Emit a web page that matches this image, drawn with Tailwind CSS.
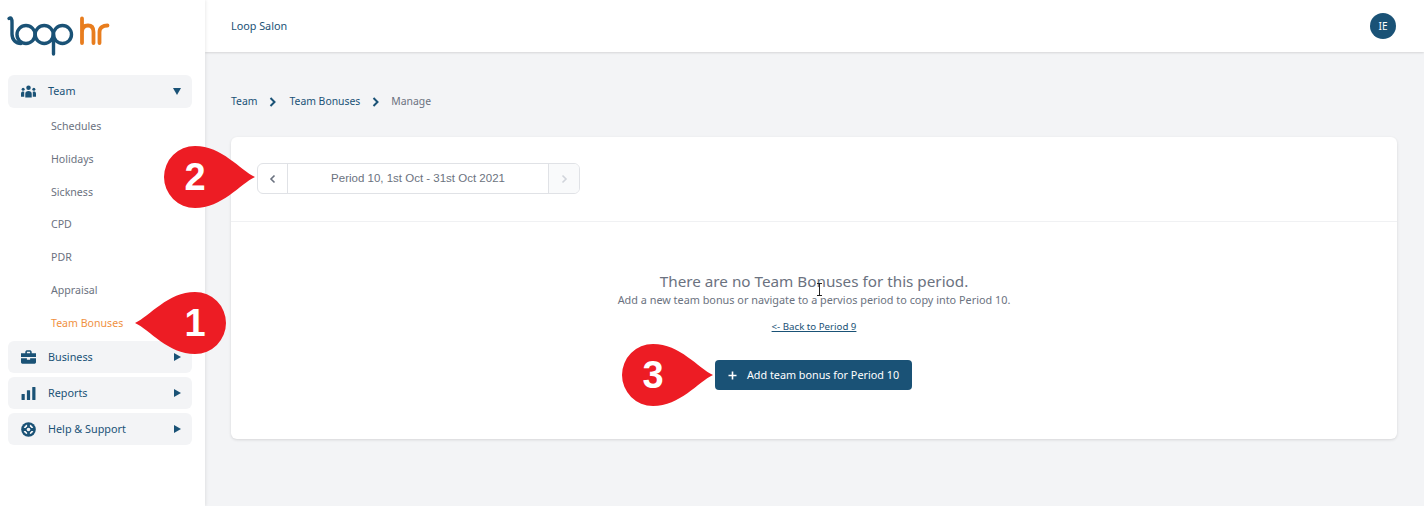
<!DOCTYPE html>
<html lang="en">
  <head>
    <meta charset="UTF-8" />
    <meta name="viewport" content="width=device-width, initial-scale=1.0" />
    <title>Team Bonuses</title>
    <script src="https://cdn.jsdelivr.net/npm/@tailwindcss/browser@4"></script>
  </head>
  <body>
    <main class="relative flex h-[506px] w-full overflow-hidden bg-[#f3f4f6] font-['Noto_Sans',sans-serif] text-[10.8px] text-[#1a5276]">
      <!-- Sidebar -->
      <aside class="z-10 flex w-[205px] shrink-0 flex-col bg-white pl-2 pr-[13px] shadow-[1px_0_3px_rgba(0,0,0,0.08)]">
        <div class="h-[75px] pt-[8px]">
          <svg width="120" height="52" viewBox="0 0 120 52" fill="none" stroke-width="3.4" stroke-linecap="round" class="-ml-2">
            <g stroke="#1a5276">
              <path d="M9 10.500 C11 9 12 10.500 12 14.500 V26 C12 32 16 35.500 21 35.500" />
              <circle cx="26" cy="26.500" r="9" />
              <circle cx="44.200" cy="26.500" r="9" />
              <circle cx="62.500" cy="26.500" r="9" />
              <path d="M53.500 26.500 V46" />
            </g>
            <g stroke="#e87d1e" stroke-width="3.800">
              <path d="M82 10.500 V35 M82 24 C82 19 85 17.500 88 17.500 C91.500 17.500 93.500 20 93.500 24 V35" />
              <path d="M99.500 35 V24 C99.500 19.500 103 17.500 107.500 17.500" />
            </g>
          </svg>
        </div>
        <nav class="flex flex-col">
          <div class="flex h-[33px] items-center rounded-md bg-[#f3f4f6] pl-[13px] pr-[11px]">
            <svg width="15" height="13" viewBox="0 0 14 12" fill="#1a5276">
              <circle cx="7" cy="2.400" r="2.100" /><circle cx="2" cy="4" r="1.400" /><circle cx="12" cy="4" r="1.400" />
              <path d="M4 11.500 V8 C4 6.300 5.200 5.500 7 5.500 C8.800 5.500 10 6.300 10 8 V11.500 Z M0 11 V8 C0 6.600 .8 6 2 6 L3 6.200 V11 Z M14 11 V8 C14 6.600 13.200 6 12 6 L11 6.200 V11 Z" />
            </svg>
            <span class="ml-[12px]">Team</span>
            <svg class="ml-auto" width="8" height="7" viewBox="0 0 8 7" fill="#1a5276"><path d="M0 0 H8 L4 7 Z" /></svg>
          </div>
          <ul class="flex h-[233px] flex-col pl-[43px] pt-[3px] text-[10.6px] text-[#6b7280]">
            <li class="flex h-[32.7px] items-center">Schedules</li>
            <li class="flex h-[32.7px] items-center">Holidays</li>
            <li class="flex h-[32.7px] items-center">Sickness</li>
            <li class="flex h-[32.7px] items-center">CPD</li>
            <li class="flex h-[32.7px] items-center">PDR</li>
            <li class="flex h-[32.7px] items-center">Appraisal</li>
            <li class="flex h-[32.7px] items-center text-[#f0913f]">Team Bonuses</li>
          </ul>
          <div class="flex flex-col gap-[4px]">
            <div class="flex h-[32px] items-center rounded-md bg-[#f3f4f6] pl-[13px] pr-[11px]">
              <svg width="15" height="14" viewBox="0 0 14 13" fill="#1a5276">
                <path d="M4 3 V2 C4 .8 5 .2 6 .2 H8 C9 .2 10 .8 10 2 V3 H14 V6.600 H0 V3 Z M5.500 3 H8.500 V1.700 H5.500 Z M0 7.600 H5.500 V9 H8.500 V7.600 H14 V11.500 C14 12.300 13.400 12.800 12.800 12.800 H1.200 C.6 12.800 0 12.300 0 11.500 Z" />
              </svg>
              <span class="ml-[12px]">Business</span>
              <svg class="ml-auto" width="7" height="8" viewBox="0 0 7 8" fill="#1a5276"><path d="M0 0 L7 4 L0 8 Z" /></svg>
            </div>
            <div class="flex h-[32px] items-center rounded-md bg-[#f3f4f6] pl-[13px] pr-[11px]">
              <svg width="15" height="13" viewBox="0 0 14 12" fill="#1a5276">
                <rect x="0.500" y="6.500" width="3" height="5.500" rx=".5" /><rect x="5.500" y="3" width="3" height="9" rx=".5" /><rect x="10.500" y="0" width="3" height="12" rx=".5" />
              </svg>
              <span class="ml-[12px]">Reports</span>
              <svg class="ml-auto" width="7" height="8" viewBox="0 0 7 8" fill="#1a5276"><path d="M0 0 L7 4 L0 8 Z" /></svg>
            </div>
            <div class="flex h-[32px] items-center rounded-md bg-[#f3f4f6] pl-[13px] pr-[11px]">
              <svg width="15" height="15" viewBox="0 0 14 14">
                <circle cx="7" cy="7" r="6.800" fill="#1a5276" />
                <circle cx="7" cy="7" r="3.800" fill="none" stroke="#f3f4f6" stroke-width="1.800" />
                <path d="M7 1 V13 M1 7 H13" stroke="#1a5276" stroke-width="2.600" />
                <circle cx="7" cy="7" r="1.700" fill="#f3f4f6" />
              </svg>
              <span class="ml-[12px]">Help &amp; Support</span>
              <svg class="ml-auto" width="7" height="8" viewBox="0 0 7 8" fill="#1a5276"><path d="M0 0 L7 4 L0 8 Z" /></svg>
            </div>
          </div>
        </nav>
      </aside>

      <div class="flex min-w-0 flex-1 flex-col">
        <!-- Header -->
        <header class="flex h-[52px] shrink-0 items-center justify-between bg-white pl-[26px] pr-[28px] shadow-[0_1px_2px_rgba(0,0,0,0.12)]">
          <span>Loop Salon</span>
          <span class="flex size-[26px] items-center justify-center rounded-full bg-[#1a5276] text-[10px] text-white">IE</span>
        </header>

        <!-- Breadcrumb -->
        <div class="flex h-[85px] shrink-0 items-center pl-[26px] pt-[15px] text-[10.4px]">
          <span>Team</span>
          <svg class="ml-[12px] mr-[13px]" width="7" height="10" viewBox="0 0 7 10" fill="none" stroke="#1a5276" stroke-width="2"><path d="M1.500 1 L5.500 5 L1.500 9" /></svg>
          <span>Team Bonuses</span>
          <svg class="ml-[12px] mr-[12px]" width="7" height="10" viewBox="0 0 7 10" fill="none" stroke="#1a5276" stroke-width="2"><path d="M1.500 1 L5.500 5 L1.500 9" /></svg>
          <span class="text-[#6b7280]">Manage</span>
        </div>

        <!-- Card -->
        <section class="ml-[26px] mr-[27px] h-[302px] rounded-md bg-white shadow-[0_1px_3px_rgba(0,0,0,0.12)]">
          <div class="flex h-[85px] items-start border-b border-[#f0f1f3] pl-[26px] pt-[26px]">
            <div class="flex h-[31px] w-[323px] overflow-hidden rounded-md border border-[#e0e2e6] font-['Liberation_Sans',sans-serif]">
              <span class="flex w-[30px] items-center justify-center border-r border-[#e0e2e6]">
                <svg width="7" height="10" viewBox="0 0 7 10" fill="none" stroke="#6b7280" stroke-width="1.600"><path d="M5.500 1.500 L2 5 L5.500 8.500" /></svg>
              </span>
              <span class="flex flex-1 items-center justify-center text-[11.5px] text-[#6b7280]">Period 10, 1st Oct - 31st Oct 2021</span>
              <span class="flex w-[31px] items-center justify-center border-l border-[#e0e2e6] bg-[#f9fafb]">
                <svg width="7" height="10" viewBox="0 0 7 10" fill="none" stroke="#d1d5db" stroke-width="1.600"><path d="M1.500 1.500 L5 5 L1.500 8.500" /></svg>
              </span>
            </div>
          </div>
          <div class="flex flex-col items-center pt-[48px] text-[#6b7280]">
            <h2 class="text-[15.25px] leading-[22px]">There are no Team Bonuses for this period.</h2>
            <p class="text-[10.85px] leading-[15px]">Add a new team bonus or navigate to a pervios period to copy into Period 10.</p>
            <a class="mt-[14px] text-[9.7px] leading-[12px] text-[#1a5276] underline">&lt;- Back to Period 9</a>
            <button class="-ml-[1px] mt-[27px] flex h-[30px] w-[197px] items-center justify-center gap-[10px] rounded bg-[#1a5276] text-[10.8px] text-white">
              <svg width="9" height="9" viewBox="0 0 9 9" stroke="#fff" stroke-width="1.600"><path d="M4.500 .5 V8.500 M.5 4.500 H8.500" /></svg>
              Add team bonus for Period 10
            </button>
          </div>
        </section>
      </div>

      <!-- Text cursor over the heading -->
      <svg class="absolute left-[816px] top-[283px]" width="7" height="13" viewBox="0 0 7 13" fill="none" stroke="#222" stroke-width="1"><path d="M1 .5 H6 M3.500 .5 V12.500 M1 12.500 H6" /></svg>

      <!-- Numbered callouts -->
      <div class="absolute left-[135px] top-[292px] z-20 h-[62px] w-[91px]">
        <svg width="91" height="62" viewBox="0 0 91 62" class="-scale-x-100"><path d="M91 31 C76 24 58 0 31 0 A31 31 0 0 0 31 62 C58 62 76 38 91 31 Z" fill="#ed1c24" /></svg>
        <span class="absolute left-[29px] top-0 flex h-[62px] w-[62px] items-center justify-center font-['Liberation_Sans',sans-serif] text-[38px] font-bold text-white">1</span>
      </div>
      <div class="absolute left-[164px] top-[146px] z-20 h-[62px] w-[91px]">
        <svg width="91" height="62" viewBox="0 0 91 62"><path d="M91 31 C76 24 58 0 31 0 A31 31 0 0 0 31 62 C58 62 76 38 91 31 Z" fill="#ed1c24" /></svg>
        <span class="absolute left-0 top-0 flex h-[62px] w-[62px] items-center justify-center font-['Liberation_Sans',sans-serif] text-[38px] font-bold text-white">2</span>
      </div>
      <div class="absolute left-[622px] top-[344px] z-20 h-[62px] w-[91px]">
        <svg width="91" height="62" viewBox="0 0 91 62"><path d="M91 31 C76 24 58 0 31 0 A31 31 0 0 0 31 62 C58 62 76 38 91 31 Z" fill="#ed1c24" /></svg>
        <span class="absolute left-0 top-0 flex h-[62px] w-[62px] items-center justify-center font-['Liberation_Sans',sans-serif] text-[38px] font-bold text-white">3</span>
      </div>
    </main>
  </body>
</html>
